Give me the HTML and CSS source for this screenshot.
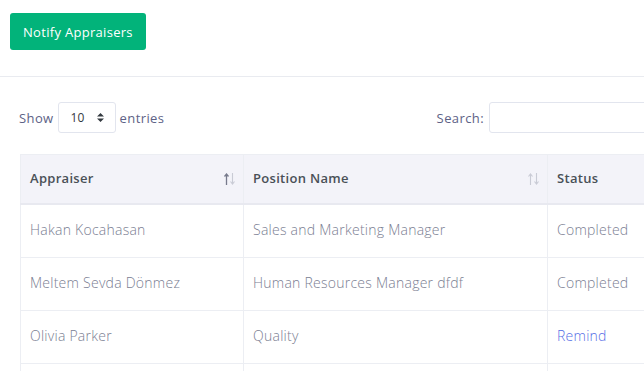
FILE: index.html
```html
<!DOCTYPE html>
<html>
<head>
    <title>Appraisers</title>
    <link rel="stylesheet" href="styles.css">
</head>
<body>
    <div class="page">
        <div class="card-header">
            <button class="btn-notify">Notify Appraisers</button>
        </div>
        <div class="card-body">
            <div class="table-tools">
                <label class="length">
                    Show
                    <span class="select-box">
                        <span>10</span>
                        <svg width="7" height="9" viewBox="0 0 7 9"><path d="M3.5 0 L7 3.5 H0 Z M3.5 9 L0 5.5 H7 Z" fill="#343a40"/></svg>
                    </span>
                    entries
                </label>
                <label class="search">
                    Search:
                    <input type="text">
                </label>
            </div>
            <table class="data-table">
                <thead>
                    <tr>
                        <th class="col-appraiser">Appraiser
                            <svg class="sort" width="11" height="12" viewBox="0 0 11 12">
                                <path d="M2.5 12 V1 M0.5 3.5 L2.5 1 L4.5 3.5" stroke="#777a8c" stroke-width="1.3" fill="none"/>
                                <path d="M8.5 0 V11 M6.5 8.5 L8.5 11 L10.5 8.5" stroke="#c9cbd5" stroke-width="1.1" fill="none"/>
                            </svg>
                        </th>
                        <th class="col-position">Position Name
                            <svg class="sort" width="11" height="12" viewBox="0 0 11 12">
                                <path d="M2.5 12 V1 M0.5 3.5 L2.5 1 L4.5 3.5" stroke="#c9cbd5" stroke-width="1.1" fill="none"/>
                                <path d="M8.5 0 V11 M6.5 8.5 L8.5 11 L10.5 8.5" stroke="#c9cbd5" stroke-width="1.1" fill="none"/>
                            </svg>
                        </th>
                        <th>Status</th>
                    </tr>
                </thead>
                <tbody>
                    <tr>
                        <td>Hakan Kocahasan</td>
                        <td>Sales and Marketing Manager</td>
                        <td>Completed</td>
                    </tr>
                    <tr>
                        <td>Meltem Sevda Dönmez</td>
                        <td>Human Resources Manager dfdf</td>
                        <td>Completed</td>
                    </tr>
                    <tr>
                        <td>Olivia Parker</td>
                        <td>Quality</td>
                        <td><a href="#" class="remind">Remind</a></td>
                    </tr>
                    <tr>
                        <td>&nbsp;</td>
                        <td>&nbsp;</td>
                        <td>&nbsp;</td>
                    </tr>
                </tbody>
            </table>
        </div>
    </div>
</body>
</html>
```

FILE: styles.css
```css
body {
    margin: 0;
    font-family: "Open Sans", Arial, sans-serif;
    font-size: 13px;
    color: #495057;
    background-color: #fff;
    overflow: hidden;
}
.page {
    width: 680px;
}
.card-header {
    padding: 13px 10px 26px;
    border-bottom: 1px solid #e9ebf0;
}
.btn-notify {
    background-color: #02b37a;
    color: #fff;
    border: none;
    border-radius: 3px;
    height: 37px;
    padding: 0 13px;
    font-family: inherit;
    font-size: 13px;
    letter-spacing: 0.3px;
    cursor: pointer;
}
.card-body {
    padding: 25px 0 0 20px;
}
.table-tools {
    display: flex;
    justify-content: space-between;
    align-items: center;
    margin-left: -1px;
    margin-bottom: 21px;
    color: #5d6286;
    letter-spacing: 0.4px;
}
.length {
    display: flex;
    align-items: center;
    gap: 4px;
}
.select-box {
    display: flex;
    align-items: center;
    justify-content: space-between;
    box-sizing: border-box;
    width: 58px;
    height: 31px;
    padding: 0 11px 0 12px;
    border: 1px solid #e2e5ee;
    border-radius: 3px;
    font-size: 12px;
    letter-spacing: 0;
    color: #343a40;
}
.search {
    display: flex;
    align-items: center;
    gap: 5px;
}
.search input {
    box-sizing: border-box;
    width: 191px;
    height: 31px;
    border: 1px solid #e2e5ee;
    border-radius: 3px;
}
.data-table {
    width: 660px;
    border-collapse: collapse;
    border: 1px solid #eceef3;
}
.data-table th {
    background-color: #f3f3f9;
    text-align: left;
    font-weight: 600;
    letter-spacing: 0.3px;
    color: #495057;
    height: 46px;
    padding: 0 9px 2px;
    border: 1px solid #eceef3;
    border-bottom: 2px solid #e8e9f0;
    position: relative;
}
.col-appraiser {
    width: 204px;
}
.col-position {
    width: 285px;
}
.sort {
    position: absolute;
    right: 8px;
    top: 18px;
}
.data-table td {
    height: 49px;
    padding: 0 9px 3px;
    border: 1px solid #eceef3;
    color: #7a7e92;
    font-size: 14px;
    font-weight: 300;
    letter-spacing: 0.25px;
    line-height: 18px;
}
.remind {
    color: #556ee6;
    text-decoration: none;
}
```
